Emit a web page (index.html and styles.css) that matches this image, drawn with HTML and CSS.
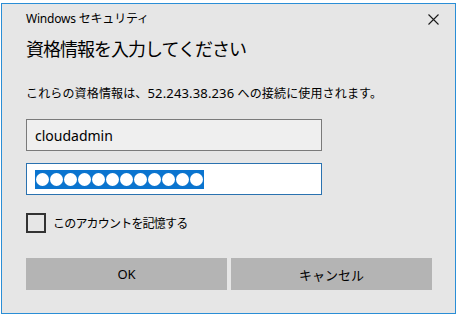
FILE: index.html
```html
<!DOCTYPE html>
<html lang="ja">
<head>
    <meta charset="UTF-8">
    <title>Windows セキュリティ</title>
    <link rel="stylesheet" href="styles.css">
</head>
<body>
    <div class="dialog">
        <!-- Title bar -->
        <div class="titlebar">
            <span class="title">Windows セキュリティ</span>
            <svg class="close" width="11" height="11" viewBox="0 0 11 11">
                <path d="M0.5 0.5 L10.5 10.5 M10.5 0.5 L0.5 10.5" stroke="#1a1a1a" stroke-width="1.1" fill="none"/>
            </svg>
        </div>

        <div class="content">
            <h1 class="heading">資格情報を入力してください</h1>
            <p class="desc">これらの資格情報は、<span class="latin">52.243.38.236</span> への接続に使用されます。</p>

            <div class="field field-user">cloudadmin</div>
            <div class="field field-pass">
                <span class="selection">
                    <span class="dot"></span><span class="dot"></span><span class="dot"></span>
                    <span class="dot"></span><span class="dot"></span><span class="dot"></span>
                    <span class="dot"></span><span class="dot"></span><span class="dot"></span>
                    <span class="dot"></span><span class="dot"></span><span class="dot"></span>
                </span>
            </div>

            <label class="remember">
                <span class="checkbox"></span>
                <span class="remember-text">このアカウントを記憶する</span>
            </label>

            <div class="buttons">
                <button class="btn">OK</button>
                <button class="btn">キャンセル</button>
            </div>
        </div>
    </div>
</body>
</html>
```

FILE: styles.css
```css
body {
    margin: 0;
    background: #ffffff;
    font-family: "Noto Sans", "Noto Sans CJK JP", sans-serif;
    color: #000;
}

.dialog {
    box-sizing: border-box;
    width: 455px;
    height: 311px;
    margin: 3px 0 0 1px;
    background: #e6e6e6;
    border: 1px solid #2a8ed6;
}

/* Title bar */
.titlebar {
    display: flex;
    align-items: center;
    justify-content: space-between;
    height: 20px;
    padding: 5px 16px 0 24px;
}

.title {
    font-size: 12px;
    line-height: 20px;
    letter-spacing: -0.2px;
}

.close {
    display: block;
    margin-top: 1px;
}

.content {
    padding: 0 0 0 24px;
}

.heading {
    margin: 7px 0 0 0;
    font-size: 18px;
    font-weight: normal;
    line-height: 26px;
    letter-spacing: -1px;
}

.desc {
    margin: 22px 0 0 0;
    font-size: 12px;
    line-height: 18px;
    letter-spacing: 0.15px;
}

.desc .latin {
    font-size: 13px;
}

.field {
    box-sizing: border-box;
    width: 296px;
    height: 32px;
    display: flex;
    align-items: center;
    padding-left: 8px;
    font-size: 14px;
}

.field-user {
    margin-top: 16px;
    background: #efefef;
    border: 1px solid #7a7a7a;
}

.field-pass {
    margin-top: 12px;
    background: #ffffff;
    border: 1px solid #2a72b0;
}

.selection {
    display: flex;
    gap: 1px;
    align-items: center;
    height: 19px;
    padding: 0 1px;
    background: #0a74cf;
}

.dot {
    width: 13px;
    height: 13px;
    border-radius: 50%;
    background: #ffffff;
}

.remember {
    display: flex;
    align-items: center;
    gap: 7px;
    margin-top: 18px;
    height: 20px;
}

.checkbox {
    box-sizing: border-box;
    width: 20px;
    height: 20px;
    border: 2px solid #333333;
}

.remember-text {
    font-size: 12px;
    letter-spacing: -0.8px;
}

.buttons {
    display: flex;
    gap: 4px;
    margin-top: 25px;
}

.btn {
    width: 201px;
    height: 32px;
    border: none;
    background: #b4b4b4;
    font-family: inherit;
    font-size: 13px;
    color: #000;
    padding: 0;
}
```
